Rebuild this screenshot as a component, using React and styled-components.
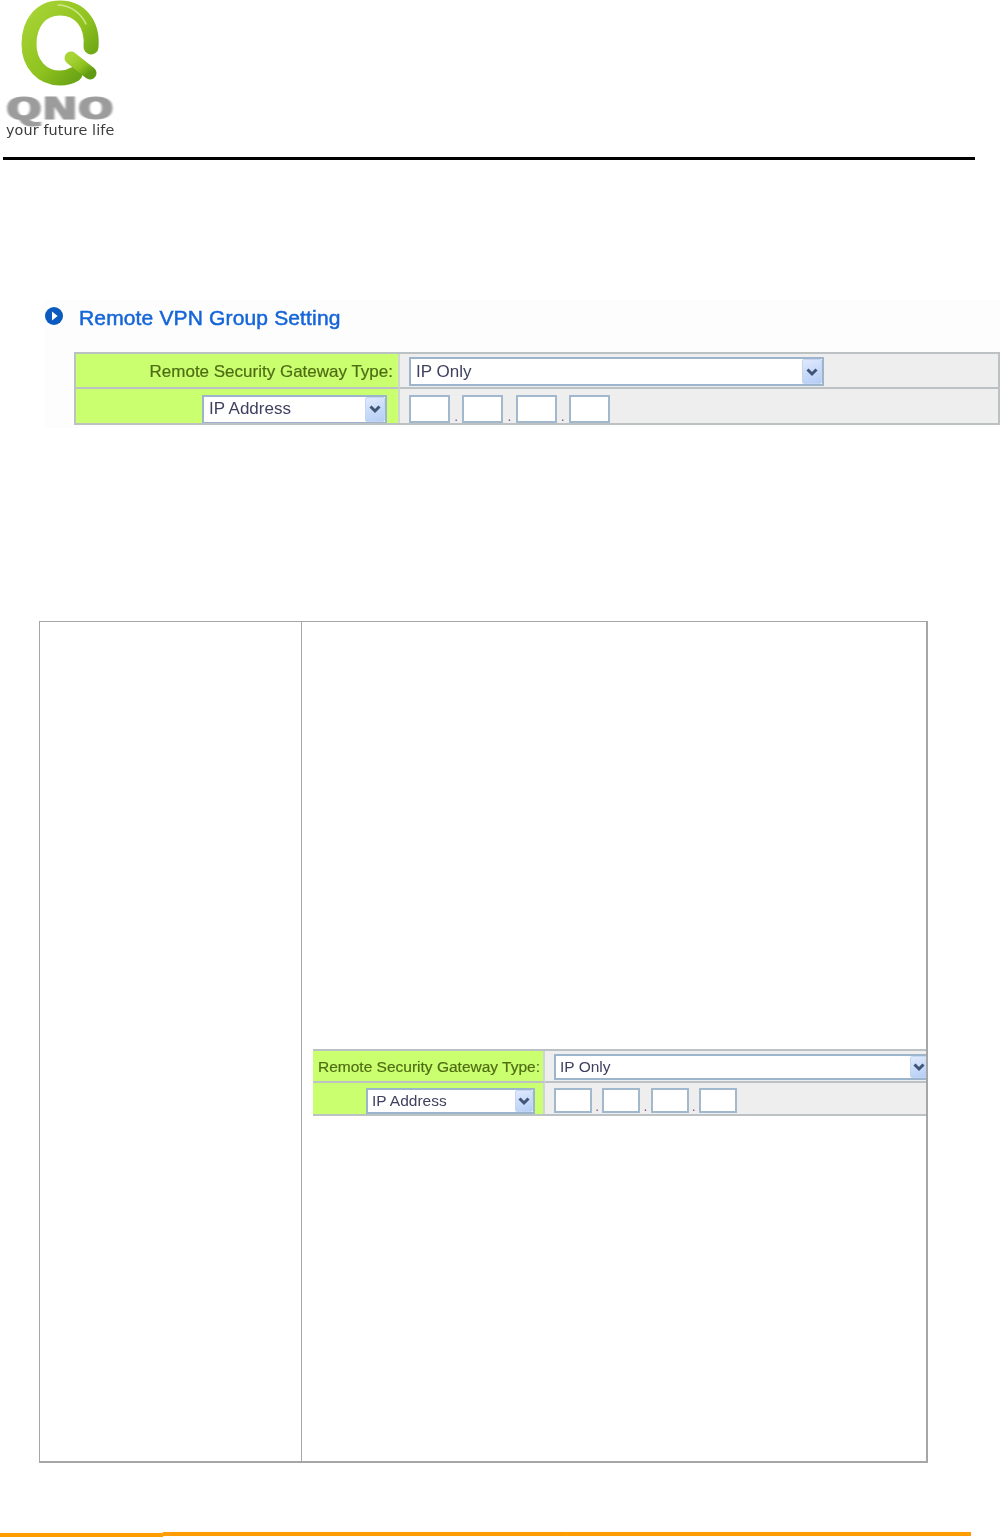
import React from 'react';
import styled, { createGlobalStyle } from 'styled-components';

const GlobalStyle = createGlobalStyle`
  html, body {
    margin: 0;
    padding: 0;
    background: #ffffff;
    font-family: "Liberation Sans", Arial, sans-serif;
  }
`;

// sizes of the two screenshots of the same settings table
const BIG = {
  font: 17,
  labelCol: 324,
  rowA: 35,
  rowB: 34,
  rowPad: 6,
  selectH: 29,
  typeSelect: 415,
  addrSelect: 185,
  addrGap: 6,
  arrow: 20,
  inputW: 41,
  inputGap: 12.3,
  valuePad: 9,
  labelPad: 5,
  textPad: 5,
};

const SMALL = {
  font: 15.5,
  labelCol: 232,
  rowA: 32,
  rowB: 31,
  rowPad: 4,
  selectH: 26,
  typeSelect: 376,
  addrSelect: 169,
  addrGap: 5,
  arrow: 18,
  inputW: 38,
  inputGap: 10.3,
  valuePad: 9,
  labelPad: 3,
  textPad: 4,
};

const Page = styled.div`
  width: 1007px;
  height: 1537px;
  overflow: hidden;
  display: flex;
  flex-direction: column;
`;

const Header = styled.header`
  height: 157px;
  display: flex;
  flex-direction: column;
  align-items: flex-start;
  padding-left: 6px;
  box-sizing: border-box;
`;

const LogoArt = styled.svg`
  display: block;
  width: 110px;
  height: 97px;
  filter: blur(0.5px);
`;

const Wordmark = styled.span`
  display: block;
  height: 26px;
  font-family: "Liberation Mono", monospace;
  font-size: 31px;
  font-weight: 700;
  line-height: 25px;
  color: #9c9c9c;
  -webkit-text-stroke: 1px #9c9c9c;
  transform: scale(1.93, 1.1);
  transform-origin: left center;
  filter: blur(0.5px);
`;

const Tagline = styled.span`
  font-family: "DejaVu Sans", sans-serif;
  font-size: 14.4px;
  line-height: 15px;
  color: #3c3c3c;
  letter-spacing: 0.1px;
  white-space: nowrap;
  filter: blur(0.3px);
`;

const HeaderRule = styled.div`
  width: 972px;
  height: 3px;
  margin-left: 3px;
  background: #000000;
`;

const Section = styled.section`
  margin: 140px 0 0 45px;
  width: 955px;
  height: 128px;
  background: #fdfdfd;
`;

const SectionTitle = styled.div`
  display: flex;
  align-items: center;
  gap: 16px;
  height: 36px;
`;

const TitleIcon = styled.svg`
  width: 18px;
  height: 18px;
  flex: none;
  margin-bottom: 4px;
`;

const TitleText = styled.h2`
  margin: 0;
  font-size: 21px;
  font-weight: 400;
  letter-spacing: 0.15px;
  color: #1565d8;
  -webkit-text-stroke: 0.5px #1565d8;
  filter: blur(0.3px);
`;

const SectionBody = styled.div`
  margin: 16px 0 0 30px;
`;

const Table = styled.div`
  display: grid;
  grid-template-columns: ${(p) => p.$size.labelCol}px 1fr;
  grid-template-rows: ${(p) => p.$size.rowA}px ${(p) => p.$size.rowB}px;
  font-size: ${(p) => p.$size.font}px;
  box-sizing: border-box;
  border-top: 2px solid #bcc2c4;
  border-bottom: 2px solid #bcc2c4;
  border-left: ${(p) => (p.$framed ? '2px solid #bcc2c4' : '0')};
  border-right: ${(p) => (p.$framed ? '2px solid #bcc2c4' : '0')};
  margin-left: ${(p) => (p.$framed ? '-1px' : '0')};
  overflow: hidden;
  filter: blur(0.3px);
`;

const LabelCell = styled.div`
  display: flex;
  align-items: center;
  justify-content: flex-end;
  box-sizing: border-box;
  padding-right: ${(p) => p.$size.labelPad}px;
  padding-top: ${(p) => (p.$first ? 2 : p.$size.rowPad)}px;
  background: #caff70;
  color: #4f6c14;
  white-space: nowrap;
  border-right: 2px solid #cfd4d4;
  border-bottom: ${(p) => (p.$first ? '2px solid #bcc2c4' : '0')};
  -webkit-text-stroke: 0.2px #4f6c14;
`;

const ValueCell = styled.div`
  display: flex;
  align-items: center;
  box-sizing: border-box;
  padding-left: ${(p) => p.$size.valuePad}px;
  padding-top: ${(p) => (p.$first ? 2 : p.$size.rowPad)}px;
  background: #eeeeee;
  border-bottom: ${(p) => (p.$first ? '2px solid #bcc2c4' : '0')};
  min-width: 0;
`;

const Select = styled.div`
  display: flex;
  align-items: center;
  justify-content: space-between;
  flex: none;
  box-sizing: border-box;
  width: ${(p) => p.$width}px;
  height: ${(p) => p.$size.selectH}px;
  margin-right: ${(p) => p.$gap || 0}px;
  padding-left: ${(p) => p.$size.textPad}px;
  background: #ffffff;
  border: 2px solid #9cb5cd;
  color: #3f3f5f;
  white-space: nowrap;
  -webkit-text-stroke: 0;
`;

const SelectArrow = styled.span`
  display: flex;
  align-items: center;
  justify-content: center;
  flex: none;
  box-sizing: border-box;
  width: ${(p) => p.$size.arrow}px;
  height: 100%;
  background: linear-gradient(160deg, #dfe9fc, #b4cdf6);
  border: 1px solid #c4d6f2;
  border-radius: 2px;
`;

const IpFields = styled.div`
  display: flex;
  align-items: flex-end;
`;

const IpBox = styled.span`
  display: block;
  box-sizing: border-box;
  width: ${(p) => p.$size.inputW}px;
  height: ${(p) => p.$size.selectH - 1}px;
  background: #ffffff;
  border: 2px solid #a2b8cd;
`;

const IpDot = styled.span`
  display: block;
  width: ${(p) => p.$size.inputGap}px;
  text-align: center;
  font-size: 14px;
  line-height: 14px;
  color: #7a5a8a;
`;

const DocTable = styled.div`
  display: grid;
  grid-template-columns: 262px 1fr;
  box-sizing: border-box;
  width: 889px;
  height: 842px;
  margin: 193px 0 0 39px;
  border-top: 1px solid #a6a6a6;
  border-left: 1px solid #a6a6a6;
  border-right: 2px solid #a6a6a6;
  border-bottom: 2px solid #a6a6a6;
`;

const DocTerm = styled.div`
  border-right: 1px solid #a6a6a6;
`;

const DocBody = styled.div`
  padding: 427px 0 0 11px;
  overflow: hidden;
  min-width: 0;
`;

const Footer = styled.footer`
  display: flex;
  align-items: flex-start;
  margin: 69px 0 0 0;
  height: 5px;
`;

const FooterBar = styled.div`
  width: ${(p) => p.$width}px;
  height: 4px;
  margin-top: ${(p) => p.$drop}px;
  background: #ff9c00;
  box-shadow: 0 0 1px #ffd9a0;
`;

const Chevron = () => (
  <svg width="14" height="10" viewBox="0 0 14 10" aria-hidden="true">
    <path d="M2.5 2.5 L7 7 L11.5 2.5" fill="none" stroke="#3f5578" strokeWidth="3" />
  </svg>
);

const Dropdown = ({ size, width, gap, children }) => (
  <Select $size={size} $width={width} $gap={gap}>
    {children}
    <SelectArrow $size={size}>
      <Chevron />
    </SelectArrow>
  </Select>
);

const IpInputs = ({ size }) => (
  <IpFields>
    <IpBox $size={size} />
    <IpDot $size={size}>.</IpDot>
    <IpBox $size={size} />
    <IpDot $size={size}>.</IpDot>
    <IpBox $size={size} />
    <IpDot $size={size}>.</IpDot>
    <IpBox $size={size} />
  </IpFields>
);

const GatewayTable = ({ size, framed }) => (
  <Table $size={size} $framed={framed}>
    <LabelCell $size={size} $first>
      Remote Security Gateway Type:
    </LabelCell>
    <ValueCell $size={size} $first>
      <Dropdown size={size} width={size.typeSelect}>
        IP Only
      </Dropdown>
    </ValueCell>
    <LabelCell $size={size}>
      <Dropdown size={size} width={size.addrSelect} gap={size.addrGap}>
        IP Address
      </Dropdown>
    </LabelCell>
    <ValueCell $size={size}>
      <IpInputs size={size} />
    </ValueCell>
  </Table>
);

const Logo = () => (
  <LogoArt viewBox="6 0 110 97" aria-hidden="true">
    <defs>
      <linearGradient id="ring" x1="0" y1="0" x2="1" y2="1">
        <stop offset="0" stopColor="#a8d436" />
        <stop offset="0.55" stopColor="#8fc31f" />
        <stop offset="1" stopColor="#5f9a12" />
      </linearGradient>
    </defs>
    <path
      d="M91 47 C93 24 80 8 60 8 C40 8 29 24 29 44 C29 64 42 78 60 78 C65 78 70 77 75 74"
      fill="none"
      stroke="url(#ring)"
      strokeWidth="15"
      strokeLinecap="round"
    />
    <path d="M71 58 L90 73" fill="none" stroke="url(#ring)" strokeWidth="13" strokeLinecap="round" />
    <path
      d="M86 24 C80 11 68 5 58 5"
      fill="none"
      stroke="#cfe88a"
      strokeWidth="1.5"
      strokeLinecap="round"
    />
  </LogoArt>
);

export default function App() {
  return (
    <Page>
      <GlobalStyle />
      <Header>
        <Logo />
        <Wordmark>QNO</Wordmark>
        <Tagline>your future life</Tagline>
      </Header>
      <HeaderRule />

      <Section>
        <SectionTitle>
          <TitleIcon viewBox="0 0 18 18" aria-hidden="true">
            <circle cx="9" cy="9" r="9" fill="#0a5abf" />
            <path d="M7 4.6 L12.6 9 L7 13.4 Z" fill="#ffffff" />
          </TitleIcon>
          <TitleText>Remote VPN Group Setting</TitleText>
        </SectionTitle>
        <SectionBody>
          <GatewayTable size={BIG} framed />
        </SectionBody>
      </Section>

      <DocTable>
        <DocTerm />
        <DocBody>
          <GatewayTable size={SMALL} />
        </DocBody>
      </DocTable>

      <Footer>
        <FooterBar $width={163} $drop={1} />
        <FooterBar $width={404} $drop={0} />
        <FooterBar $width={404} $drop={0} />
      </Footer>
    </Page>
  );
}
